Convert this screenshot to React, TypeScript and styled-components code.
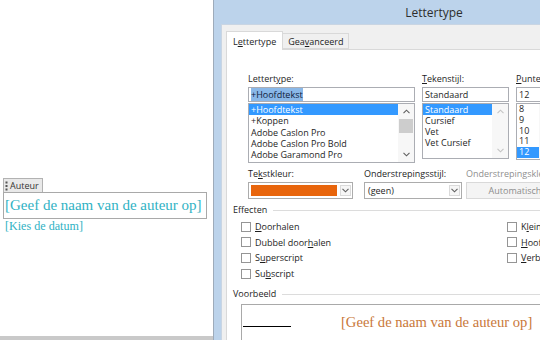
import React from "react";
import styled, { createGlobalStyle } from "styled-components";

const UI = `"Open Sans", "Noto Sans", sans-serif`;
const SERIF = `"Liberation Serif", "DejaVu Serif", serif`;

const GlobalStyle = createGlobalStyle`
  html, body { margin: 0; padding: 0; background: #fff; }
  body { width: 540px; height: 340px; overflow: hidden; font-family: ${UI}; }
  * { box-sizing: border-box; }
`;

const Screen = styled.div`
  display: flex;
  width: 540px;
  height: 340px;
  overflow: hidden;
  background: #fff;
`;

/* ---------- document page ---------- */
const Page = styled.div`
  flex: 0 0 214px;
  display: flex;
  flex-direction: column;
  border-right: 1px solid #9eabba;
`;
const PageBody = styled.div`
  flex: 1;
  display: flex;
  flex-direction: column;
  align-items: flex-start;
  padding: 178px 0 0 3px;
`;
const PageFooter = styled.div`
  height: 4px;
  background: #c9c9c9;
`;
const AuthorTag = styled.div`
  display: flex;
  align-items: center;
  gap: 2px;
  height: 14px;
  padding: 0 3px 0 1px;
  border: 1px solid #b2b2b2;
  border-bottom: 0;
  background: #e9e9e9;
  font: 9px ${UI};
  color: #333;
`;
const AuthorBox = styled.div`
  width: 204px;
  height: 27px;
  border: 1px solid #a9a9a9;
  display: flex;
  align-items: center;
  padding-left: 1px;
  font: 15px/1 ${SERIF};
  color: #30b2c4;
  white-space: nowrap;
`;
const DateText = styled.div`
  margin-left: 2px;
  font: 12.1px/14px ${SERIF};
  color: #30b2c4;
`;

/* ---------- dialog ---------- */
const Dialog = styled.div`
  flex: 0 0 440px;
  display: flex;
  flex-direction: column;
  background: #bcd3eb;
`;
const TitleBar = styled.div`
  height: 24px;
  display: flex;
  align-items: center;
  justify-content: center;
  font: 12px ${UI};
  color: #2d2d2d;
`;
const Frame = styled.div`
  flex: 1;
  display: flex;
  padding-left: 7px;
  min-height: 0;
`;
const Client = styled.div`
  flex: 1;
  display: flex;
  flex-direction: column;
  background: #f0f0f0;
  border-left: 1px solid #c9d5e3;
  border-top: 1px solid #c9d5e3;
  padding: 6px 0 0 4px;
`;
const TabStrip = styled.div`
  display: flex;
  align-items: flex-end;
  height: 18px;
  position: relative;
  z-index: 1;
`;
const Tab = styled.div<{ $active?: boolean }>`
  height: ${(p) => (p.$active ? 19 : 16)}px;
  margin-bottom: ${(p) => (p.$active ? -1 : 0)}px;
  padding: 0 ${(p) => (p.$active ? 6 : 5)}px;
  display: flex;
  align-items: center;
  border: 1px solid #d9d9d9;
  border-bottom: ${(p) => (p.$active ? "0" : "1px solid #d9d9d9")};
  border-left: ${(p) => (p.$active ? "1px solid #d9d9d9" : "0")};
  background: ${(p) => (p.$active ? "#fff" : "#f0f0f0")};
  font: 9px ${UI};
  color: #1e1e1e;
`;
const Panel = styled.div`
  flex: 1;
  background: #fff;
  border: 1px solid #d9d9d9;
  padding: 22px 0 0 6px;
  display: flex;
  flex-direction: column;
`;

const Row = styled.div<{ $mt?: number }>`
  display: flex;
  margin: ${(p) => p.$mt ?? 0}px 0 0 15px;
`;
const Field = styled.div<{ $w: number; $ml?: number }>`
  flex: 0 0 ${(p) => p.$w}px;
  margin-left: ${(p) => p.$ml ?? 0}px;
  display: flex;
  flex-direction: column;
`;
const Label = styled.div<{ $disabled?: boolean }>`
  height: 14px;
  margin-bottom: 1px;
  font: 9px/14px ${UI};
  color: ${(p) => (p.$disabled ? "#8f8f8f" : "#1e1e1e")};
  white-space: nowrap;
`;
const TextInput = styled.div`
  height: 15px;
  border: 1px solid #abadb3;
  padding: 0 2px;
  font: 9px/13px ${UI};
  color: #1e1e1e;
  white-space: nowrap;
  overflow: hidden;
`;
const SelText = styled.span`
  background: #8ab8e8;
  color: #10203a;
`;
const ListBox = styled.div<{ $h: number }>`
  height: ${(p) => p.$h}px;
  margin-top: 1px;
  border: 1px solid #abadb3;
  display: flex;
  overflow: hidden;
`;
const Items = styled.div`
  flex: 1;
  min-width: 0;
`;
const Item = styled.div<{ $sel?: boolean; $h: number }>`
  height: ${(p) => p.$h}px;
  line-height: ${(p) => p.$h}px;
  padding: 0 2px;
  font-family: ${UI};
  font-size: 9px;
  white-space: nowrap;
  background: ${(p) => (p.$sel ? "#3399ff" : "transparent")};
  color: ${(p) => (p.$sel ? "#fff" : "#1e1e1e")};
`;
const ScrollBar = styled.div`
  flex: 0 0 16px;
  display: flex;
  flex-direction: column;
  background: #f7f7f7;
`;
const ScrollArrow = styled.div`
  height: 15px;
  display: flex;
  align-items: center;
  justify-content: center;
`;
const Track = styled.div`
  flex: 1;
  padding: 0 1px;
`;
const Thumb = styled.div`
  height: 14px;
  background: #cdcdcd;
`;

const Combo = styled.div<{ $disabled?: boolean }>`
  height: 17px;
  border: 1px solid ${(p) => (p.$disabled ? "#d9d9d9" : "#acacac")};
  background: ${(p) => (p.$disabled ? "#f4f4f4" : "#fff")};
  display: flex;
  align-items: stretch;
  gap: 3px;
  padding: 1px 1px 1px 2px;
  font: 9px/13px ${UI};
  color: #1e1e1e;
  justify-content: ${(p) => (p.$disabled ? "center" : "flex-start")};
`;
const Swatch = styled.div<{ $color: string }>`
  flex: 1;
  margin: 1px 0;
  background: ${(p) => p.$color};
`;
const ComboText = styled.div<{ $disabled?: boolean }>`
  flex: ${(p) => (p.$disabled ? "0 0 auto" : "1")};
  padding-left: 1px;
  color: ${(p) => (p.$disabled ? "#8d8d8d" : "#1e1e1e")};
  white-space: nowrap;
`;
const DropButton = styled.div`
  flex: 0 0 11px;
  margin: 1px 0;
  border: 1px solid #dadada;
  background: #f6f6f6;
  display: flex;
  align-items: center;
  justify-content: center;
`;

const GroupHeader = styled.div<{ $mt: number }>`
  display: flex;
  align-items: center;
  gap: 6px;
  margin-top: ${(p) => p.$mt}px;
  height: 14px;
  font: 9px/14px ${UI};
  color: #1e1e1e;
  &::after {
    content: "";
    flex: 1;
    height: 1px;
    background: #dcdcdc;
  }
`;
const CheckGrid = styled.div`
  display: grid;
  grid-template-columns: 266px auto;
  grid-template-rows: repeat(4, 15.6px);
  grid-auto-flow: column;
  margin: 2px 0 0 8px;
`;
const CheckItem = styled.div`
  display: flex;
  align-items: center;
  gap: 4px;
  font: 9px ${UI};
  color: #1e1e1e;
  white-space: nowrap;
`;
const CheckBox = styled.span`
  width: 10px;
  height: 10px;
  border: 1px solid #959595;
  background: #fff;
`;
const PreviewBox = styled.div`
  height: 50px;
  margin: 3px 0 0 8px;
  border: 1px solid #a9a9a9;
  display: flex;
  align-items: flex-start;
  padding: 9px 0 0 1px;
  white-space: nowrap;
`;
const Rule = styled.div`
  flex: 0 0 48px;
  height: 1px;
  margin-top: 12px;
  background: #000;
`;
const PreviewText = styled.div`
  margin-left: 50px;
  font: 14.6px/17px ${SERIF};
  color: #c9783a;
`;

/* ---------- icons ---------- */
const Chevron = ({ up, color = "#5f5f5f" }: { up?: boolean; color?: string }) => (
  <svg width="7" height="5" viewBox="0 0 7 5">
    <polyline
      points={up ? "0.5,4.2 3.5,1.2 6.5,4.2" : "0.5,0.8 3.5,3.8 6.5,0.8"}
      fill="none"
      stroke={color}
      strokeWidth="1.1"
    />
  </svg>
);
const Grip = () => (
  <svg width="3" height="10" viewBox="0 0 3 10">
    <rect x="0.5" y="0.5" width="2" height="2" fill="#555" />
    <rect x="0.5" y="4" width="2" height="2" fill="#555" />
    <rect x="0.5" y="7.5" width="2" height="2" fill="#555" />
  </svg>
);

const fonts = ["+Hoofdtekst", "+Koppen", "Adobe Caslon Pro", "Adobe Caslon Pro Bold", "Adobe Garamond Pro"];
const styles = ["Standaard", "Cursief", "Vet", "Vet Cursief"];
const sizes = ["8", "9", "10", "11", "12"];

type ListProps = { items: string[]; sel: string; h: number; itemH: number; thumb?: boolean; disabled?: boolean };
const List = ({ items, sel, h, itemH, thumb, disabled }: ListProps) => (
  <ListBox $h={h}>
    <Items>
      {items.map((it) => (
        <Item key={it} $sel={it === sel} $h={itemH}>
          {it}
        </Item>
      ))}
    </Items>
    <ScrollBar>
      <ScrollArrow>
        <Chevron up color={disabled ? "#c4c4c4" : "#5f5f5f"} />
      </ScrollArrow>
      <Track>{thumb && <Thumb />}</Track>
      <ScrollArrow>
        <Chevron color={disabled ? "#c4c4c4" : "#5f5f5f"} />
      </ScrollArrow>
    </ScrollBar>
  </ListBox>
);

export default function App() {
  return (
    <>
      <GlobalStyle />
      <Screen>
        <Page>
          <PageBody>
            <AuthorTag>
              <Grip />
              Auteur
            </AuthorTag>
            <AuthorBox>[Geef de naam van de auteur op]</AuthorBox>
            <DateText>[Kies de datum]</DateText>
          </PageBody>
          <PageFooter />
        </Page>
        <Dialog>
          <TitleBar>Lettertype</TitleBar>
          <Frame>
            <Client>
              <TabStrip>
                <Tab $active>
                  L<u>e</u>ttertype
                </Tab>
                <Tab>
                  Gea<u>v</u>anceerd
                </Tab>
              </TabStrip>
              <Panel>
                <Row>
                  <Field $w={167}>
                    <Label>
                      Lettert<u>y</u>pe:
                    </Label>
                    <TextInput>
                      <SelText>+Hoofdtekst</SelText>
                    </TextInput>
                    <List items={fonts} sel="+Hoofdtekst" h={60} itemH={11.3} thumb />
                  </Field>
                  <Field $w={87} $ml={7}>
                    <Label>
                      <u>T</u>ekenstijl:
                    </Label>
                    <TextInput>Standaard</TextInput>
                    <List items={styles} sel="Standaard" h={56} itemH={11} disabled />
                  </Field>
                  <Field $w={40} $ml={7}>
                    <Label>
                      <u>P</u>unten:
                    </Label>
                    <TextInput>12</TextInput>
                    <List items={sizes} sel="12" h={57} itemH={10.8} />
                  </Field>
                </Row>
                <Row $mt={4}>
                  <Field $w={105}>
                    <Label>
                      Te<u>k</u>stkleur:
                    </Label>
                    <Combo>
                      <Swatch $color="#e8650c" />
                      <DropButton>
                        <Chevron />
                      </DropButton>
                    </Combo>
                  </Field>
                  <Field $w={98} $ml={11}>
                    <Label>
                      Onderstrepingssti<u>j</u>l:
                    </Label>
                    <Combo>
                      <ComboText>(geen)</ComboText>
                      <DropButton>
                        <Chevron />
                      </DropButton>
                    </Combo>
                  </Field>
                  <Field $w={96} $ml={4}>
                    <Label $disabled>Onderstrepingskleur:</Label>
                    <Combo $disabled>
                      <ComboText $disabled>Automatisch</ComboText>
                    </Combo>
                  </Field>
                </Row>
                <GroupHeader $mt={4}>Effecten</GroupHeader>
                <CheckGrid>
                  <CheckItem>
                    <CheckBox />
                    <span>
                      <u>D</u>oorhalen
                    </span>
                  </CheckItem>
                  <CheckItem>
                    <CheckBox />
                    <span>
                      Dubbel door<u>h</u>alen
                    </span>
                  </CheckItem>
                  <CheckItem>
                    <CheckBox />
                    <span>
                      S<u>u</u>perscript
                    </span>
                  </CheckItem>
                  <CheckItem>
                    <CheckBox />
                    <span>
                      Su<u>b</u>script
                    </span>
                  </CheckItem>
                  <CheckItem>
                    <CheckBox />
                    <span>
                      K<u>l</u>einkapitaal
                    </span>
                  </CheckItem>
                  <CheckItem>
                    <CheckBox />
                    <span>
                      <u>H</u>oofdletters
                    </span>
                  </CheckItem>
                  <CheckItem>
                    <CheckBox />
                    <span>
                      <u>V</u>erborgen
                    </span>
                  </CheckItem>
                </CheckGrid>
                <GroupHeader $mt={6}>Voorbeeld</GroupHeader>
                <PreviewBox>
                  <Rule />
                  <PreviewText>[Geef de naam van de auteur op]</PreviewText>
                </PreviewBox>
              </Panel>
            </Client>
          </Frame>
        </Dialog>
      </Screen>
    </>
  );
}
